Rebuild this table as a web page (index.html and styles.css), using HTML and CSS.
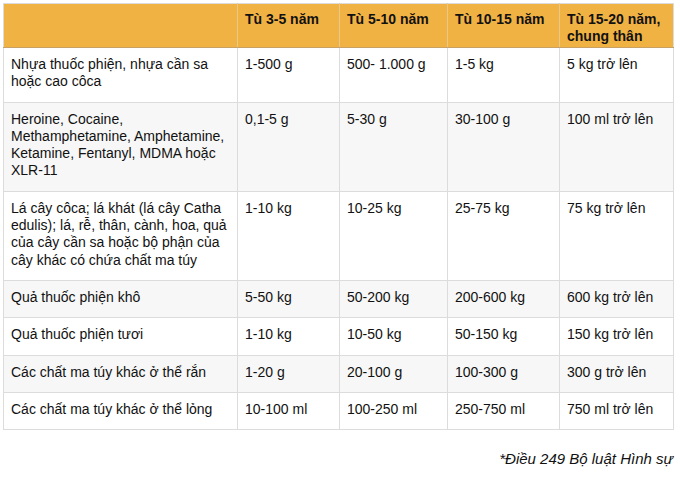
FILE: index.html
```html
<!DOCTYPE html>
<html lang="vi">
<head>
<meta charset="utf-8">
<title>Điều 249 Bộ luật Hình sự</title>
<link rel="stylesheet" href="styles.css">
</head>
<body>
<div class="page">
  <table class="penalty">
    <colgroup>
      <col class="c-name">
      <col class="c1">
      <col class="c2">
      <col class="c3">
      <col class="c4">
    </colgroup>
    <thead>
      <tr>
        <th></th>
        <th>Tù 3-5 năm</th>
        <th>Tù 5-10 năm</th>
        <th>Tù 10-15 năm</th>
        <th>Tù 15-20 năm, chung thân</th>
      </tr>
    </thead>
    <tbody>
      <tr>
        <td>Nhựa thuốc phiện, nhựa cần sa hoặc cao côca</td>
        <td>1-500 g</td>
        <td>500- 1.000 g</td>
        <td>1-5 kg</td>
        <td>5 kg trở lên</td>
      </tr>
      <tr>
        <td>Heroine, Cocaine, Methamphetamine, Amphetamine, Ketamine, Fentanyl, MDMA hoặc XLR-11</td>
        <td>0,1-5 g</td>
        <td>5-30 g</td>
        <td>30-100 g</td>
        <td>100 ml trở lên</td>
      </tr>
      <tr>
        <td>Lá cây côca; lá khát (lá cây Catha edulis); lá, rễ, thân, cành, hoa, quả của cây cần sa hoặc bộ phận của cây khác có chứa chất ma túy</td>
        <td>1-10 kg</td>
        <td>10-25 kg</td>
        <td>25-75 kg</td>
        <td>75 kg trở lên</td>
      </tr>
      <tr>
        <td>Quả thuốc phiện khô</td>
        <td>5-50 kg</td>
        <td>50-200 kg</td>
        <td>200-600 kg</td>
        <td>600 kg trở lên</td>
      </tr>
      <tr>
        <td>Quả thuốc phiện tươi</td>
        <td>1-10 kg</td>
        <td>10-50 kg</td>
        <td>50-150 kg</td>
        <td>150 kg trở lên</td>
      </tr>
      <tr>
        <td>Các chất ma túy khác ở thể rắn</td>
        <td>1-20 g</td>
        <td>20-100 g</td>
        <td>100-300 g</td>
        <td>300 g trở lên</td>
      </tr>
      <tr>
        <td>Các chất ma túy khác ở thể lỏng</td>
        <td>10-100 ml</td>
        <td>100-250 ml</td>
        <td>250-750 ml</td>
        <td>750 ml trở lên</td>
      </tr>
    </tbody>
  </table>
  <p class="source">*Điều 249 Bộ luật Hình sự</p>
</div>
</body>
</html>
```

FILE: styles.css
```css
html, body {
  margin: 0;
  padding: 0;
  background: #ffffff;
}

body {
  font-family: "Liberation Sans", Arial, "Helvetica Neue", sans-serif;
  color: #111111;
  font-size: 14px;
}

.page {
  padding: 3px 7px 0 3px;
}

.penalty {
  width: 670px;
  border-collapse: collapse;
  table-layout: fixed;
  border: 1px solid #dcdcdc;
}

.c-name { width: 234px; }
.c1 { width: 102px; }
.c2 { width: 108px; }
.c3 { width: 112px; }
.c4 { width: 114px; }

.penalty th {
  background: #f1b244;
  font-weight: bold;
  text-align: left;
  vertical-align: top;
  line-height: 17px;
  padding: 7px 7px 2px 7px;
  border-left: 1px solid #e8c98a;
  border-bottom: 1px solid #c9a165;
  color: #111111;
}

.penalty th:first-child {
  border-left: none;
}

.penalty td {
  vertical-align: top;
  line-height: 17.3px;
  padding: 8px 7px 11px 7px;
  border: 1px solid #dcdcdc;
}

.penalty tbody tr:nth-child(even) td {
  background: #f7f7f7;
}

.source {
  margin: 20px 0 0 0;
  text-align: right;
  font-style: italic;
  font-size: 15px;
  line-height: 18px;
}
```
